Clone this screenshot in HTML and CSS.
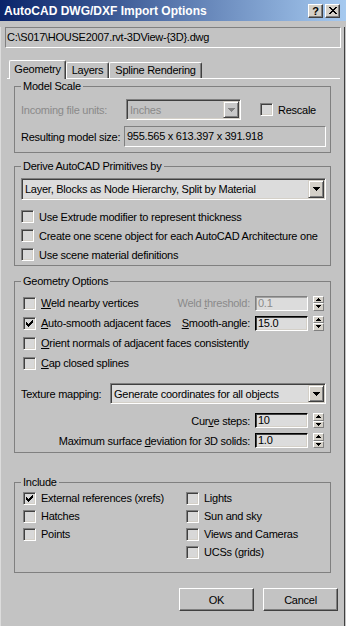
FILE: index.html
```html
<!DOCTYPE html>
<html lang="en">

<head>
    <meta charset="UTF-8">
    <meta name="viewport" content="width=device-width, initial-scale=1.0">
    <title>AutoCAD DWG/DXF Import Options</title>
    <link rel="stylesheet" href="styles.css">
</head>

<body>
    <div class="window">
        <div class="titlebar">
            <span class="title">AutoCAD DWG/DXF Import Options</span>
            <div class="caption-btns">
                <span class="cap-btn">?</span>
                <span class="cap-btn">
                    <svg width="8" height="7" viewBox="0 0 8 7"><path d="M0 0h2v1h1v1h2v-1h1v-1h2v1h-1v1h-1v1h-1v1h1v1h1v1h1v1h-2v-1h-1v-1h-2v1h-1v1h-2v-1h1v-1h1v-1h1v-1h-1v-1h-1v-1h-1z" fill="#000"/></svg>
                </span>
            </div>
        </div>

        <div class="dialog">
            <div class="path-field">C:\S017\HOUSE2007.rvt-3DView-{3D}.dwg</div>

            <div class="tabs">
                <span class="tab active">Geometry</span>
                <span class="tab tab-layers">Layers</span>
                <span class="tab tab-spline">Spline Rendering</span>
            </div>

            <div class="panel">
                <!-- model scale -->
                <fieldset class="group group-scale">
                    <legend>Model Scale</legend>
                    <div class="row row-units">
                        <span class="lbl lbl-units disabled">Incoming file units:</span>
                        <div class="combo combo-units disabled">
                            <span class="combo-text">Inches</span>
                            <span class="combo-btn">
                                <svg width="7" height="4" viewBox="0 0 7 4"><path d="M0 0h7v1h-1v1h-1v1h-1v1h-1v-1h-1v-1h-1v-1h-1z" fill="#808080"/></svg>
                            </span>
                        </div>
                        <label class="check check-rescale"><span class="box"></span>Rescale</label>
                    </div>
                    <div class="row row-size">
                        <span class="lbl lbl-size">Resulting model size:</span>
                        <div class="field field-size">955.565 x 613.397 x 391.918</div>
                    </div>
                </fieldset>

                <!-- primitives -->
                <fieldset class="group group-derive">
                    <legend>Derive AutoCAD Primitives by</legend>
                    <div class="combo combo-derive">
                        <span class="combo-text">Layer, Blocks as Node Hierarchy, Split by Material</span>
                        <span class="combo-btn">
                            <svg width="7" height="4" viewBox="0 0 7 4"><path d="M0 0h7v1h-1v1h-1v1h-1v1h-1v-1h-1v-1h-1v-1h-1z" fill="#000"/></svg>
                        </span>
                    </div>
                    <div class="checks-derive">
                        <label class="check"><span class="box"></span>Use Extrude modifier to represent thickness</label>
                        <label class="check"><span class="box"></span>Create one scene object for each AutoCAD Architecture one</label>
                        <label class="check"><span class="box"></span>Use scene material definitions</label>
                    </div>
                </fieldset>

                <!-- geometry -->
                <fieldset class="group group-geom">
                    <legend>Geometry Options</legend>
                    <div class="row geom-row">
                        <label class="check"><span class="box"></span><span><u>W</u>eld nearby vertices</span></label>
                        <div class="spin-group">
                            <span class="lbl disabled">Weld <u>t</u>hreshold:</span>
                            <span class="num disabled">0.1</span>
                            <span class="spin">
                                <span class="spin-btn"><svg width="5" height="3" viewBox="0 0 5 3"><path d="M2 0h1v1h1v1h1v1h-5v-1h1v-1h1z" fill="#000"/></svg></span>
                                <span class="spin-btn"><svg width="5" height="3" viewBox="0 0 5 3"><path d="M0 0h5v1h-1v1h-1v1h-1v-1h-1v-1h-1z" fill="#000"/></svg></span>
                            </span>
                        </div>
                    </div>
                    <div class="row geom-row">
                        <label class="check"><span class="box checked"><svg width="7" height="7" viewBox="0 0 7 7"><path d="M6 0h1v1h-1zM5 1h2v1h-2zM0 2h1v1h-1zM4 2h3v1h-3zM0 3h2v1h-2zM3 3h3v1h-3zM0 4h5v1h-5zM1 5h3v1h-3zM2 6h1v1h-1z" fill="#000"/></svg></span><span><u>A</u>uto-smooth adjacent faces</span></label>
                        <div class="spin-group">
                            <span class="lbl"><u>S</u>mooth-angle:</span>
                            <span class="num">15.0</span>
                            <span class="spin">
                                <span class="spin-btn"><svg width="5" height="3" viewBox="0 0 5 3"><path d="M2 0h1v1h1v1h1v1h-5v-1h1v-1h1z" fill="#000"/></svg></span>
                                <span class="spin-btn"><svg width="5" height="3" viewBox="0 0 5 3"><path d="M0 0h5v1h-1v1h-1v1h-1v-1h-1v-1h-1z" fill="#000"/></svg></span>
                            </span>
                        </div>
                    </div>
                    <div class="row geom-row">
                        <label class="check"><span class="box"></span><span><u>O</u>rient normals of adjacent faces consistently</span></label>
                    </div>
                    <div class="row geom-row">
                        <label class="check"><span class="box"></span><span><u>C</u>ap closed splines</span></label>
                    </div>
                    <div class="row row-texture">
                        <span class="lbl">Texture mapping:</span>
                        <div class="combo combo-texture">
                            <span class="combo-text">Generate coordinates for all objects</span>
                            <span class="combo-btn">
                                <svg width="7" height="4" viewBox="0 0 7 4"><path d="M0 0h7v1h-1v1h-1v1h-1v1h-1v-1h-1v-1h-1v-1h-1z" fill="#000"/></svg>
                            </span>
                        </div>
                    </div>
                    <div class="row row-curve">
                        <div class="spin-group">
                            <span class="lbl">Cur<u>v</u>e steps:</span>
                            <span class="num">10</span>
                            <span class="spin">
                                <span class="spin-btn"><svg width="5" height="3" viewBox="0 0 5 3"><path d="M2 0h1v1h1v1h1v1h-5v-1h1v-1h1z" fill="#000"/></svg></span>
                                <span class="spin-btn"><svg width="5" height="3" viewBox="0 0 5 3"><path d="M0 0h5v1h-1v1h-1v1h-1v-1h-1v-1h-1z" fill="#000"/></svg></span>
                            </span>
                        </div>
                    </div>
                    <div class="row row-dev">
                        <div class="spin-group">
                            <span class="lbl">Maximum surface <u>d</u>eviation for 3D solids:</span>
                            <span class="num">1.0</span>
                            <span class="spin">
                                <span class="spin-btn"><svg width="5" height="3" viewBox="0 0 5 3"><path d="M2 0h1v1h1v1h1v1h-5v-1h1v-1h1z" fill="#000"/></svg></span>
                                <span class="spin-btn"><svg width="5" height="3" viewBox="0 0 5 3"><path d="M0 0h5v1h-1v1h-1v1h-1v-1h-1v-1h-1z" fill="#000"/></svg></span>
                            </span>
                        </div>
                    </div>
                </fieldset>

                <!-- include -->
                <fieldset class="group group-include">
                    <legend>Include</legend>
                    <div class="include-grid">
                        <label class="check"><span class="box checked"><svg width="7" height="7" viewBox="0 0 7 7"><path d="M6 0h1v1h-1zM5 1h2v1h-2zM0 2h1v1h-1zM4 2h3v1h-3zM0 3h2v1h-2zM3 3h3v1h-3zM0 4h5v1h-5zM1 5h3v1h-3zM2 6h1v1h-1z" fill="#000"/></svg></span>External references (xrefs)</label>
                        <label class="check"><span class="box"></span>Lights</label>
                        <label class="check"><span class="box"></span>Hatches</label>
                        <label class="check"><span class="box"></span>Sun and sky</label>
                        <label class="check"><span class="box"></span>Points</label>
                        <label class="check"><span class="box"></span>Views and Cameras</label>
                        <span></span>
                        <label class="check"><span class="box"></span>UCSs (grids)</label>
                    </div>
                </fieldset>
            </div>

            <div class="buttons">
                <button class="btn">OK</button>
                <button class="btn">Cancel</button>
            </div>
        </div>
    </div>
</body>

</html>
```

FILE: styles.css
```css
* {
    box-sizing: border-box;
}

body {
    margin: 0;
    background-color: #c3c3c3;
    font-family: "Liberation Sans", Arial, sans-serif;
    font-size: 11px;
    letter-spacing: -0.25px;
    color: #000;
}

.window {
    width: 346px;
    height: 626px;
}

/* title bar */
.titlebar {
    height: 21px;
    display: flex;
    align-items: center;
    padding: 0 6px 0 4px;
    background: linear-gradient(to right, #0a246a, #a6caf0);
}

.title {
    flex: 1;
    color: #fff;
    font-size: 12px;
    font-weight: bold;
    letter-spacing: 0;
}

.caption-btns {
    display: flex;
    gap: 2px;
}

.cap-btn {
    width: 15px;
    height: 14px;
    display: flex;
    align-items: center;
    justify-content: center;
    background-color: #d4d0c8;
    border: 1px solid;
    border-color: #fff #404040 #404040 #fff;
    box-shadow: inset -1px -1px #808080;
    font-size: 11px;
    font-weight: bold;
    letter-spacing: 0;
}

/* dialog body */
.dialog {
    width: 345px;
    height: 604px;
    border-right: 1px solid #404040;
    border-bottom: 1px solid #404040;
    border-left: 1px solid #dcdcdc;
}

.path-field {
    width: 336px;
    height: 21px;
    margin: 6px 0 0 4px;
    padding-left: 1px;
    line-height: 19px;
    border: 1px solid;
    border-color: #808080 #fff #fff #808080;
}

.tabs {
    display: flex;
    align-items: flex-end;
    width: 333px;
    height: 19px;
    margin: 12px 0 0 6px;
    padding-left: 2px;
    border-bottom: 1px solid #fff;
}

.tab {
    height: 16px;
    line-height: 14px;
    text-align: center;
    border: 1px solid;
    border-bottom: none;
    border-color: #fff #404040 #fff #fff;
    box-shadow: inset -1px 0 #808080;
    border-radius: 2px 2px 0 0;
}

.tab.active {
    width: 57px;
    height: 19px;
    margin-bottom: -1px;
    line-height: 16px;
    background-color: #c3c3c3;
}

.tab-layers {
    width: 43px;
}

.tab-spline {
    width: 93px;
}

.panel {
    padding: 1px 0 0 13px;
}

/* group boxes */
.group {
    width: 317px;
    min-width: 0;
    margin: 0;
    padding: 5px 4px 5px 6px;
    border: 1px solid #808080;
}

.group legend {
    padding: 0 2px;
    line-height: 13px;
}

.group-scale {
    padding-top: 6px;
}

.group-derive {
    margin-top: 7px;
    padding-bottom: 1px;
}

.group-geom {
    margin-top: 9px;
    padding-bottom: 4px;
}

.group-include {
    margin-top: 23px;
    padding-top: 0;
    padding-bottom: 11px;
}

.row {
    display: flex;
    align-items: center;
}

.disabled {
    color: #8a8a8a;
}

.lbl {
    white-space: nowrap;
}

.row-units {
    height: 21px;
}

.lbl-units {
    width: 105px;
}

.row-size {
    height: 21px;
    margin-top: 6px;
}

.lbl-size {
    width: 103px;
}

.field {
    height: 21px;
    line-height: 19px;
    padding-left: 2px;
    border: 1px solid;
    border-color: #808080 #fff #fff #808080;
}

.field-size {
    width: 202px;
}

/* combo boxes */
.combo {
    display: flex;
    align-items: stretch;
    background-color: #dcdcdc;
    border: 1px solid;
    border-color: #808080 #fff #fff #808080;
    box-shadow: inset 1px 1px #404040, inset -1px -1px #d4d0c8;
    padding: 1px;
}

.combo-text {
    flex: 1;
    padding-left: 2px;
    display: flex;
    align-items: center;
    white-space: nowrap;
}

.combo-btn {
    width: 16px;
    display: flex;
    align-items: center;
    justify-content: center;
    background-color: #d4d0c8;
    border: 1px solid;
    border-color: #d4d0c8 #404040 #404040 #d4d0c8;
    box-shadow: inset 1px 1px #fff, inset -1px -1px #808080;
}

.combo-units {
    width: 115px;
    height: 21px;
    background-color: #c3c3c3;
}

.combo-units .combo-btn {
    background-color: #c8c8c8;
}

.combo-derive {
    width: 305px;
    height: 22px;
}

.combo-texture {
    width: 216px;
    height: 21px;
    margin-left: auto;
}

/* check boxes */
.check {
    display: flex;
    align-items: center;
    gap: 5px;
    white-space: nowrap;
}

.box {
    width: 13px;
    height: 13px;
    flex: none;
    display: flex;
    align-items: center;
    justify-content: center;
    background-color: #d8d8d8;
    border: 1px solid;
    border-color: #808080 #fff #fff #808080;
    box-shadow: inset 1px 1px #404040, inset -1px -1px #d4d0c8;
}

.check-rescale {
    margin-left: 19px;
}

.checks-derive {
    margin-top: 7px;
}

.checks-derive .check {
    height: 19px;
}

.geom-row {
    height: 20px;
    padding-left: 2px;
}

/* spinners */
.spin-group {
    display: flex;
    align-items: center;
    margin-left: auto;
    margin-right: 2px;
}

.num {
    width: 53px;
    height: 15px;
    margin: 0 5px 0 5px;
    padding-left: 2px;
    line-height: 12px;
    background-color: #dcdcdc;
    border: 1px solid;
    border-color: #000 #fff #fff #000;
    box-shadow: inset 1px 1px #404040, inset -1px -1px #d4d0c8;
}

.num.disabled {
    border-color: #808080 #fff #fff #808080;
    box-shadow: inset 1px 1px #a0a0a0;
}

.spin {
    width: 11px;
    height: 15px;
    display: flex;
    flex-direction: column;
}

.spin-btn {
    flex: 1;
    display: flex;
    align-items: center;
    justify-content: center;
    background-color: #d4d0c8;
    border: 1px solid;
    border-color: #fff #808080 #808080 #fff;
}

.row-texture {
    height: 21px;
    margin-top: 10px;
}

.row-curve {
    height: 15px;
    margin-top: 9px;
}

.row-dev {
    height: 15px;
    margin-top: 5px;
}

/* include */
.include-grid {
    display: grid;
    grid-template-columns: 163px 1fr;
    grid-auto-rows: 18px;
    padding-left: 2px;
}

/* buttons */
.buttons {
    display: flex;
    justify-content: flex-end;
    gap: 9px;
    margin-top: 15px;
    padding-right: 6px;
}

.btn {
    width: 75px;
    height: 23px;
    padding: 0;
    font-family: inherit;
    font-size: 11px;
    letter-spacing: inherit;
    color: #000;
    background-color: #c3c3c3;
    border: 1px solid;
    border-color: #fff #404040 #404040 #fff;
    box-shadow: inset -1px -1px #808080;
}
```
